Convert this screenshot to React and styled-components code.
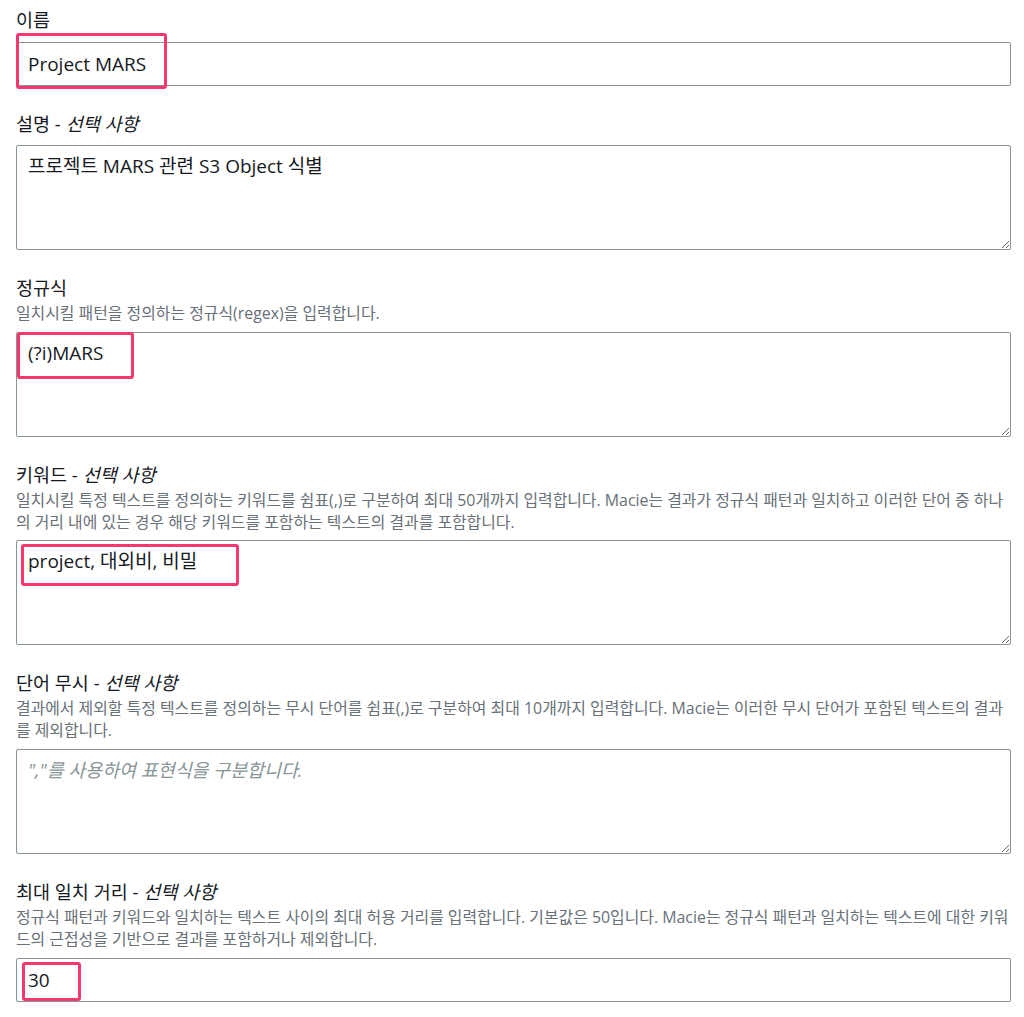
import React from "react";
import styled, { createGlobalStyle } from "styled-components";

const Global = createGlobalStyle`
  html, body { margin: 0; padding: 0; background: #ffffff; }
  body { font-family: "Open Sans", "Noto Sans CJK KR", sans-serif; color: #16191f; }
  * { box-sizing: border-box; }
`;

const Page = styled.div`
  width: 1024px;
  padding: 6px 13px 0 16px;
  display: flex;
  flex-direction: column;
  gap: 24px;
`;

const Field = styled.div`
  display: flex;
  flex-direction: column;
`;

const Label = styled.div`
  font-size: 18.5px;
  line-height: 28px;
  color: #16191f;
`;

const Optional = styled.i`
  font-style: italic;
`;

const Desc = styled.div`
  font-size: 15.9px;
  line-height: 22px;
  color: #687078;
  white-space: nowrap;
`;

const ControlWrap = styled.div`
  position: relative;
  margin-top: ${(p) => p.$gap}px;
`;

const Input = styled.input`
  display: block;
  width: 100%;
  height: 44px;
  padding: 0 11px;
  border: 1px solid #879596;
  border-radius: 2px;
  font-family: "Open Sans", "Noto Sans CJK KR", sans-serif;
  font-size: 19px;
  color: #16191f;
  background: #fff;
  outline: none;
`;

const Area = styled.textarea`
  display: block;
  width: 100%;
  height: 105px;
  padding: 7px 11px;
  border: 1px solid #879596;
  border-radius: 2px;
  font-family: "Open Sans", "Noto Sans CJK KR", sans-serif;
  font-size: 19px;
  line-height: 26px;
  color: #16191f;
  background: #fff;
  outline: none;
  resize: vertical;
  &::placeholder {
    color: #879596;
    font-style: italic;
    font-size: 18.4px;
  }
`;

const Highlight = styled.div`
  position: absolute;
  top: ${(p) => p.$top}px;
  left: ${(p) => p.$left}px;
  width: ${(p) => p.$w}px;
  height: ${(p) => p.$h}px;
  border: 3px solid #f7376e;
  border-radius: 3px;
  pointer-events: none;
`;

const Opt = () => (
  <>
    {" - "}
    <Optional>선택 사항</Optional>
  </>
);

export default function App() {
  return (
    <>
      <Global />
      <Page>
        <Field>
          <Label>이름</Label>
          <ControlWrap $gap={8}>
            <Input defaultValue="Project MARS" />
            <Highlight $top={-9} $left={0} $w={151} $h={56} />
          </ControlWrap>
        </Field>

        <Field>
          <Label>
            설명<Opt />
          </Label>
          <ControlWrap $gap={7}>
            <Area defaultValue="프로젝트 MARS 관련 S3 Object 식별" />
          </ControlWrap>
        </Field>

        <Field>
          <Label>정규식</Label>
          <Desc>일치시킬 패턴을 정의하는 정규식(regex)을 입력합니다.</Desc>
          <ControlWrap $gap={8}>
            <Area defaultValue="(?i)MARS" />
            <Highlight $top={0} $left={1} $w={117} $h={47} />
          </ControlWrap>
        </Field>

        <Field>
          <Label>
            키워드<Opt />
          </Label>
          <Desc>
            {"일치시킬 특정 텍스트를 정의하는 키워드를 쉼표(,)로 구분하여 최대 50개까지 입력합니다. Macie는 결과가 정규식 패턴과 일치하고 이러한 단어 중 하나"}
            <br />
            {"의 거리 내에 있는 경우 해당 키워드를 포함하는 텍스트의 결과를 포함합니다."}
          </Desc>
          <ControlWrap $gap={7}>
            <Area defaultValue="project, 대외비, 비밀" />
            <Highlight $top={4} $left={5} $w={218} $h={42} />
          </ControlWrap>
        </Field>

        <Field>
          <Label>
            단어 무시<Opt />
          </Label>
          <Desc>
            {"결과에서 제외할 특정 텍스트를 정의하는 무시 단어를 쉼표(,)로 구분하여 최대 10개까지 입력합니다. Macie는 이러한 무시 단어가 포함된 텍스트의 결과"}
            <br />
            {"를 제외합니다."}
          </Desc>
          <ControlWrap $gap={8}>
            <Area placeholder={'","를 사용하여 표현식을 구분합니다.'} />
          </ControlWrap>
        </Field>

        <Field>
          <Label>
            최대 일치 거리<Opt />
          </Label>
          <Desc>
            {"정규식 패턴과 키워드와 일치하는 텍스트 사이의 최대 허용 거리를 입력합니다. 기본값은 50입니다. Macie는 정규식 패턴과 일치하는 텍스트에 대한 키워"}
            <br />
            {"드의 근접성을 기반으로 결과를 포함하거나 제외합니다."}
          </Desc>
          <ControlWrap $gap={8}>
            <Input defaultValue="30" />
            <Highlight $top={4} $left={6} $w={59} $h={39} />
          </ControlWrap>
        </Field>
      </Page>
    </>
  );
}
